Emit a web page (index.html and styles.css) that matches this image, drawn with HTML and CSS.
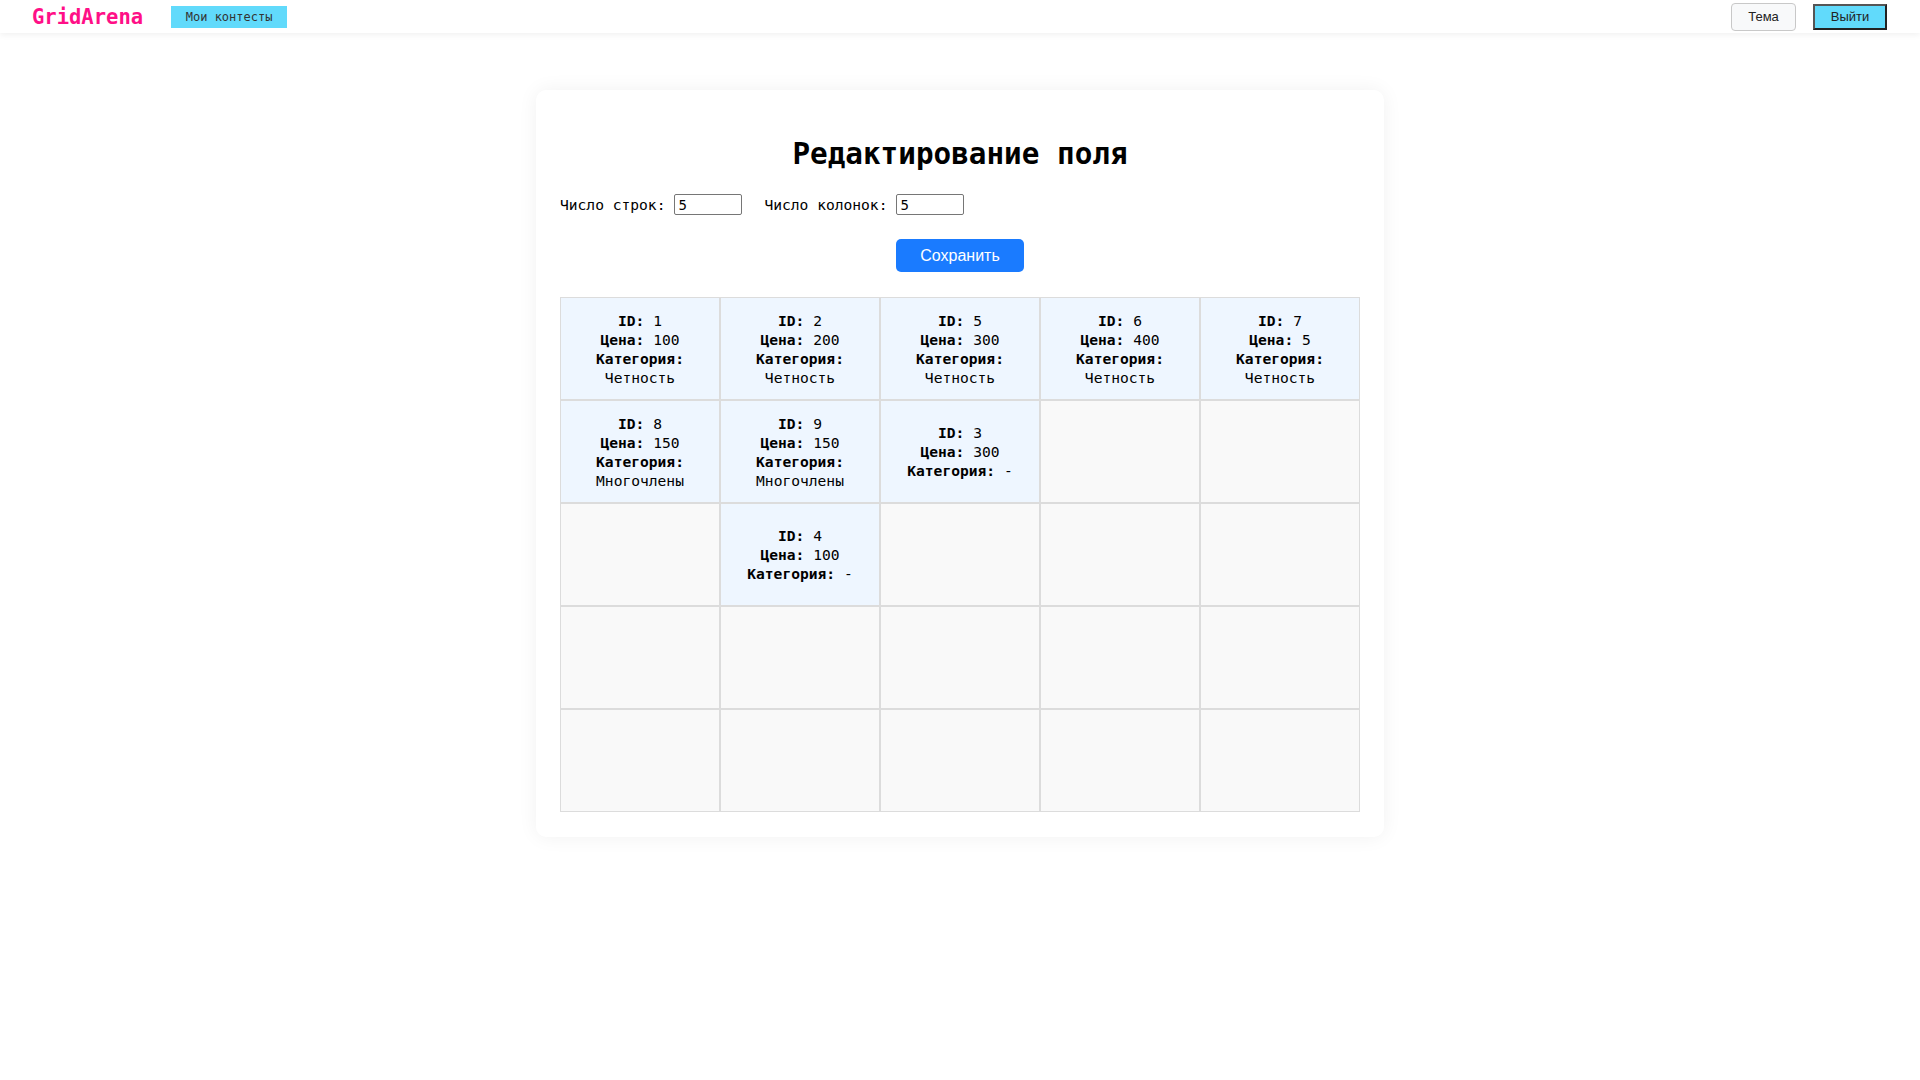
FILE: index.html
```html
<!DOCTYPE html>
<html lang="ru">
<head>
<meta charset="utf-8">
<title>GridArena</title>
<link rel="stylesheet" href="styles.css">
</head>
<body>
<header class="topbar">
  <div class="logo">GridArena</div>
  <button class="nav-btn">Мои контесты</button>
  <div class="topbar-right">
    <button class="theme-btn">Тема</button>
    <button class="logout-btn">Выйти</button>
  </div>
</header>
<main class="page">
  <section class="card">
    <h1 class="title">Редактирование поля</h1>
    <div class="controls">
      <label class="field"><span class="field-label">Число строк:</span><input class="num-input" type="text" value="5"></label>
      <label class="field"><span class="field-label">Число колонок:</span><input class="num-input" type="text" value="5"></label>
    </div>
    <div class="save-row"><button class="save-btn">Сохранить</button></div>
    <div class="grid">
      <div class="cell filled"><div><b>ID:</b> 1</div><div><b>Цена:</b> 100</div><div><b>Категория:</b> Четность</div></div>
      <div class="cell filled"><div><b>ID:</b> 2</div><div><b>Цена:</b> 200</div><div><b>Категория:</b> Четность</div></div>
      <div class="cell filled"><div><b>ID:</b> 5</div><div><b>Цена:</b> 300</div><div><b>Категория:</b> Четность</div></div>
      <div class="cell filled"><div><b>ID:</b> 6</div><div><b>Цена:</b> 400</div><div><b>Категория:</b> Четность</div></div>
      <div class="cell filled"><div><b>ID:</b> 7</div><div><b>Цена:</b> 5</div><div><b>Категория:</b> Четность</div></div>

      <div class="cell filled"><div><b>ID:</b> 8</div><div><b>Цена:</b> 150</div><div><b>Категория:</b> Многочлены</div></div>
      <div class="cell filled"><div><b>ID:</b> 9</div><div><b>Цена:</b> 150</div><div><b>Категория:</b> Многочлены</div></div>
      <div class="cell filled"><div><b>ID:</b> 3</div><div><b>Цена:</b> 300</div><div><b>Категория:</b> -</div></div>
      <div class="cell"></div>
      <div class="cell"></div>

      <div class="cell"></div>
      <div class="cell filled"><div><b>ID:</b> 4</div><div><b>Цена:</b> 100</div><div><b>Категория:</b> -</div></div>
      <div class="cell"></div>
      <div class="cell"></div>
      <div class="cell"></div>

      <div class="cell"></div>
      <div class="cell"></div>
      <div class="cell"></div>
      <div class="cell"></div>
      <div class="cell"></div>

      <div class="cell"></div>
      <div class="cell"></div>
      <div class="cell"></div>
      <div class="cell"></div>
      <div class="cell"></div>
    </div>
  </section>
</main>
</body>
</html>
```

FILE: styles.css
```css
* { box-sizing: border-box; }

body {
  margin: 0;
  background: #ffffff;
  font-family: "DejaVu Sans Mono", "Liberation Mono", monospace;
  color: #000;
}

.topbar {
  height: 33px;
  display: flex;
  align-items: center;
  padding: 0 33px 0 32px;
  background: #fff;
  box-shadow: 0 2px 6px rgba(0, 0, 0, 0.06);
}

.logo {
  font-family: "DejaVu Sans Mono", monospace;
  font-size: 20.5px;
  font-weight: bold;
  color: #ff0f87;
  margin-right: 28px;
}

.nav-btn {
  background: #61dafb;
  border: none;
  height: 22px;
  width: 116px;
  padding: 0;
  font-family: "DejaVu Sans Mono", monospace;
  font-size: 12px;
  color: #333;
}

.topbar-right {
  margin-left: auto;
  display: flex;
  align-items: center;
  gap: 17px;
}

.theme-btn {
  width: 65px;
  height: 28px;
  background: #f8f9fa;
  border: 1px solid #c8c8c8;
  border-radius: 4px;
  font-family: "Liberation Sans", Arial, sans-serif;
  font-size: 13px;
  color: #222;
  padding: 0;
}

.logout-btn {
  width: 74px;
  height: 26px;
  background: #61dafb;
  border: 2px solid #222;
  border-top-color: #555;
  border-left-color: #555;
  font-family: "Liberation Sans", Arial, sans-serif;
  font-size: 13px;
  color: #222;
  padding: 0;
}

.page {
  display: flex;
  justify-content: center;
  padding-top: 57px;
  padding-bottom: 40px;
}

.card {
  width: 848px;
  background: #fff;
  border-radius: 10px;
  box-shadow: 0 0 20px rgba(0, 0, 0, 0.06);
  padding: 24px 24px 25px;
}

.title {
  margin: 22px 0 0;
  text-align: center;
  font-family: "DejaVu Sans Mono", monospace;
  font-size: 29.3px;
  line-height: 36px;
  font-weight: bold;
}

.controls {
  display: flex;
  align-items: center;
  gap: 22px;
  margin-top: 22px;
  height: 21px;
}

.field {
  font-size: 14.6px;
  display: flex;
  align-items: center;
  gap: 9px;
}

.num-input {
  width: 68px;
  height: 21px;
  border: 1px solid #767676;
  border-radius: 2px;
  padding: 1px 3px;
  font-family: "DejaVu Sans Mono", monospace;
  font-size: 14px;
  color: #000;
}

.save-row {
  display: flex;
  justify-content: center;
  margin-top: 24px;
}

.save-btn {
  width: 128px;
  height: 33px;
  background: #1a7bff;
  color: #fff;
  border: none;
  border-radius: 5px;
  font-family: "Liberation Sans", Arial, sans-serif;
  font-size: 16px;
  padding: 0;
}

.grid {
  margin-top: 25px;
  display: grid;
  grid-template-columns: repeat(5, 160px);
  grid-template-rows: repeat(5, 103px);
}

.cell {
  border: 1px solid #dcdcdc;
  background: #f9f9f9;
  display: flex;
  flex-direction: column;
  justify-content: center;
  align-items: center;
  text-align: center;
  padding: 0 8px;
  font-size: 14.6px;
  line-height: 19px;
}

.cell.filled {
  background: #eef6ff;
}

.cell b {
  font-weight: bold;
}
```
